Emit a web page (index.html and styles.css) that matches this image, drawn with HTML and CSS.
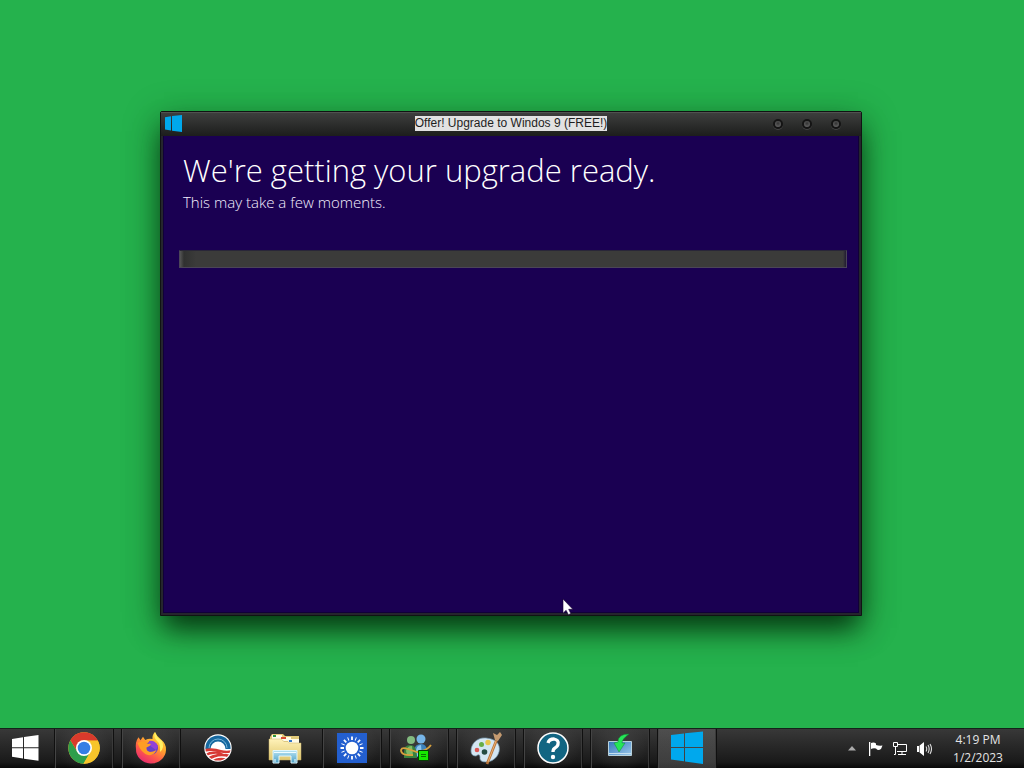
FILE: index.html
```html
<!DOCTYPE html>
<html lang="en">
<head>
<meta charset="utf-8">
<meta name="viewport" content="width=device-width, initial-scale=1">
<title>Desktop</title>
<link rel="stylesheet" href="styles.css">
</head>
<body>
<main class="desktop">
  <section class="window" aria-labelledby="window-title">
    <header class="titlebar">
      <svg class="window-logo" viewBox="0 0 17 17" aria-hidden="true"><path fill="#00a8ec" d="M0 2.200 6 1.200V15.600L0 14.600ZM7 1 17 0V17L7 15.700Z"/></svg>
      <h1 class="window-title" id="window-title">Offer! Upgrade to Windos 9 (FREE!)</h1>
      <div class="controls">
        <button class="control" aria-label="Minimize"></button>
        <button class="control" aria-label="Maximize"></button>
        <button class="control" aria-label="Close"></button>
      </div>
    </header>
    <div class="content">
      <h2 class="headline">We're getting your upgrade ready.</h2>
      <p class="detail">This may take a few moments.</p>
      <progress class="progress" value="0" max="100" aria-label="Upgrade progress"></progress>
    </div>
  </section>
  <svg class="cursor" viewBox="0 0 12 18" aria-hidden="true"><path fill="#fff" stroke="#180030" stroke-width=".6" d="M1 1V15.200L4.100 12.300 6.400 16.700 8.800 15.600 6.700 11.300H10.800Z"/></svg>
</main>
<footer class="taskbar">
  <button class="start" aria-label="Start">
    <svg width="27" height="26" viewBox="0 0 27 26"><path fill="#fff" d="M0 4 11 2.300V12.300H0ZM12 2.100 26.500 0V12.300H12ZM0 13.300H11V23.500L0 21.800ZM12 13.300H26.500V25.800L12 23.700Z"/></svg>
  </button>
  <nav class="apps" aria-label="Applications">
    <button class="app" aria-label="Chrome">
      <svg width="32" height="32" viewBox="0 0 32 32"><circle cx="16" cy="16" r="15.700" fill="#f7c52b"/><path fill="#d93a2c" d="M16 16 2.400 8.200A15.700 15.700 0 0 1 29.700 8.300H16Z"/><path fill="#2e9e4b" d="M2.400 8.200A15.700 15.700 0 0 0 15.500 31.700L22.400 20 16 16 9.400 19.800Z"/><path fill="#f7c52b" d="M29.700 8.300A15.700 15.700 0 0 1 15.500 31.700L22.700 19.500 23 12Z"/><path fill="#d93a2c" d="M2.400 8.200 9 19 16 8.300H29.700V8Z"/><circle cx="16" cy="16" r="8" fill="#fff"/><circle cx="16" cy="16" r="6.300" fill="#347ee5"/></svg>
    </button>
    <button class="app" aria-label="Firefox">
      <svg width="32" height="32" viewBox="0 0 32 32"><defs><linearGradient id="fox" x1=".85" y1="0" x2=".25" y2="1"><stop offset="0" stop-color="#ffed49"/><stop offset=".4" stop-color="#ffa52c"/><stop offset=".7" stop-color="#ff584b"/><stop offset="1" stop-color="#e52672"/></linearGradient></defs><path fill="url(#fox)" d="M3.500 5.300 5.500 8.200 8 4.800 10.200 8Q14 6 17.500 7 17 3 20 0 21.500 4 26 7.500 31.500 12 31 18A15 14 0 0 1 1 17Q0 10 3.500 5.300Z"/><circle cx="16.500" cy="16" r="6.500" fill="#6541c9"/><path fill="#9241d6" d="M14 9Q20 8 23 14L21 18 14 13Z"/><path fill="#ff9d25" d="M2.500 11Q5 8.500 10.500 9.500L12 11.500 16 12Q15 14.500 11.500 15.500 11 19 15 20 18 20 21.500 18 19 24 13 23 6 21 2.500 11Z"/><path fill="#fff063" d="M20 0Q18 5 22 9 26 12 25 20 30 16 27 9 21 5 20 0Z"/></svg>
    </button>
    <button class="app plain" aria-label="Campaign">
      <svg width="28" height="28" viewBox="0 0 28 28"><defs><clipPath id="disc"><circle cx="14" cy="14" r="12.600"/></clipPath></defs><circle cx="14" cy="14" r="13.700" fill="#fff"/><g clip-path="url(#disc)"><path fill="#16689f" d="M0 0H28V15H21.500A7.500 7.500 0 0 0 6.500 15H0Z"/><path fill="none" stroke="#76b6d9" d="M5 14A9 9 0 0 1 23 14"/><path fill="#d73a35" d="M0 15Q9 13 17 16 23 17.500 28 16V18.500Q20 20 14 18 7 16 0 18ZM0 20.500Q9 15 20 20L17 20.500Q9 18 0 23ZM1 25Q12 17 28 21L25 23.500Q14 20 4 27ZM7 27Q14 22 23 24.500L17 28Z"/></g></svg>
    </button>
    <button class="app plain" aria-label="File Explorer">
      <svg width="34" height="32" viewBox="0 0 34 32"><defs><linearGradient id="folder" x2="0" y2="1"><stop stop-color="#fff2b9"/><stop offset="1" stop-color="#dfc76d"/></linearGradient><linearGradient id="stand" x2="0" y2="1"><stop stop-color="#b8e3f3"/><stop offset="1" stop-color="#4c9fc4"/></linearGradient></defs><path fill="#e2cb7b" d="M2 5 4 2H15L17 4H31V28H2Z"/><path fill="#fffbe8" d="M4 3H14V7H4ZM12 5H23V9H12ZM20 7H31V11H20Z"/><path fill="#2f963e" d="M5 3H8V5H5Z"/><path fill="#d84a32" d="M13 5H18V7H13Z"/><path fill="#3778c7" d="M21 8H24V10H21Z"/><path fill="url(#folder)" stroke="#c9b26a" stroke-width=".5" d="M1 7H13L16 9.500H20L21 11H33V28H1Z"/><path fill="url(#stand)" stroke="#dff6fd" d="M5 18.500H29V31H23V24H11V31H5Z"/><path stroke="#effcff" fill="none" d="M6 20.500H28M7 27V30M27 27V30"/></svg>
    </button>
    <button class="app" aria-label="Brightness">
      <svg width="30" height="30" viewBox="0 0 30 30"><path fill="#235fcf" d="M0 0H30V30H0Z"/><circle cx="15" cy="15" r="6.300" fill="#fff"/><g stroke="#fff" stroke-width="1.800"><path id="rays" d="M15 3.500V7M15 23V26.500M3.500 15H7M23 15H26.500M6.900 6.900 9.300 9.300M20.700 20.700 23.100 23.100M6.900 23.100 9.300 20.700M20.700 9.300 23.100 6.900"/><use href="#rays" transform="rotate(22.500 15 15)" stroke-width="1"/></g></svg>
    </button>
    <button class="app" aria-label="Messenger">
      <svg class="nudge-left" width="34" height="32" viewBox="0 0 34 32"><circle cx="22" cy="7" r="4.500" fill="#76b5e8"/><path fill="#3d82bd" d="M15 25V18Q16 12 22 12 29 12 29 25Z"/><path fill="#8cc5ed" d="M17 20Q17 13 22 13L23 24H18Z"/><circle cx="12" cy="8" r="4" fill="#83bb80"/><path fill="#39813e" d="M5 26V20Q5 13 11 13 18 13 18 26Z"/><path fill="#83ba65" d="M7 19Q8 14 13 14L14 23H8Z"/><path fill="none" stroke="#d7a13d" stroke-width="1.800" d="M14 23Q2 24 2 18 3 15 9 17L18 20Q28 19 32 13"/><path fill="#16e900" stroke="#063f04" d="M19.500 18.500H29.500V28.500H19.500Z"/><path stroke="#087600" d="M22 22.500H27M22 24.500H27"/></svg>
    </button>
    <button class="app" aria-label="Paint">
      <svg width="34" height="34" viewBox="0 0 34 34"><path fill="#d3e6f3" stroke="#799bb0" stroke-width=".7" d="M17 7C8 6 2 13 2 20Q2 25 7 25 11 22 11 26 10 31 17 31C26 31 32 22 30 15Q28 8 17 7Z"/><circle cx="15.500" cy="21" r="2.800" fill="#244b43"/><circle cx="8" cy="19" r="2.300" fill="#d95754"/><circle cx="12.500" cy="13.500" r="2.500" fill="#67ad47"/><circle cx="19" cy="11.500" r="2.700" fill="#eac54c"/><path stroke="#b8743a" stroke-width="2.700" d="M18 33 28 8"/><path stroke="#edb071" d="M19 31 27 10"/><path fill="#c49a70" d="M26 9 24 2 28 4 31 1 33 4 29 10Z"/></svg>
    </button>
    <button class="app" aria-label="Help">
      <svg width="34" height="34" viewBox="0 0 34 34"><circle cx="17" cy="17" r="15" fill="#126582" stroke="#fff" stroke-width="1.500"/><path fill="none" stroke="#fff" stroke-width="3.300" d="M12 12Q13 8 18 8 23 9 22 13 22 15 19 17 17 18 17 21"/><circle cx="17" cy="26" r="2.200" fill="#fff"/></svg>
    </button>
    <button class="app" aria-label="Desktop download">
      <svg width="26" height="30" viewBox="0 0 26 30"><defs><linearGradient id="screen" x2="1" y2="1"><stop stop-color="#3375b9"/><stop offset="1" stop-color="#9bc8ea"/></linearGradient></defs><path fill="url(#screen)" stroke="#b7d1dc" d="M1.500 8.500H24.500V22.500H1.500Z"/><path stroke="#c6e0ef" d="M2 20.500H24"/><path fill="#25e557" stroke="#128735" stroke-width=".5" d="M22 1Q11 1 11 9L7 10 12 19 18 10H15Q15 6 22 1Z"/></svg>
    </button>
    <button class="app active" aria-label="Windos upgrade">
      <svg width="34" height="34" viewBox="0 0 34 34"><path fill="#00a8ed" d="M1 4 14 2.500V16H1ZM15 2.300 33 .5V16H15ZM1 17H14V30.200L1 28.500ZM15 17H33V33L15 30.500Z"/></svg>
    </button>
  </nav>
  <div class="tray">
    <button class="tray-icon" aria-label="Show hidden icons"><svg width="8" height="5" viewBox="0 0 8 5"><path fill="#aaa" d="M4 0 8 4.500H0Z"/></svg></button>
    <button class="tray-icon" aria-label="Action Center"><svg width="16" height="16" viewBox="0 0 16 16"><path fill="#fff" d="M1 1H2.300V15H1ZM3 2Q6 1 8 2.500V4Q11 5 14.500 4.500L13 8 11 9Q9 9 8 7.500 5 7 3 8Z"/></svg></button>
    <button class="tray-icon" aria-label="Network"><svg width="16" height="16" viewBox="0 0 16 16"><path fill="none" stroke="#fff" d="M6 3.500H14.500V10.500H5M10 11V13.500M6 13.500H14M1.500 1.500V5.500H5.500V1.500ZM3.500 6V13.500H2"/></svg></button>
    <button class="tray-icon" aria-label="Volume"><svg width="16" height="16" viewBox="0 0 16 16"><path fill="#fff" d="M1 5H3V11H1ZM3.600 4.500 8 1V15L3.600 11.500Z"/><path fill="none" stroke="#ddd" stroke-width="1.100" d="M10 5.500Q11.500 8 10 10.500M12 4Q14.300 8 12 12M14 3Q17 8 14 13"/></svg></button>
    <time class="clock" datetime="2023-01-02T16:19"><span>4:19 PM</span><span>1/2/2023</span></time>
  </div>
</footer>
</body>
</html>
```

FILE: styles.css
```css
* {
  box-sizing: border-box;
}

body {
  display: flex;
  flex-direction: column;
  min-height: 100vh;
  margin: 0;
  background: #25b24d;
  font-family: "Open Sans", "Noto Sans", sans-serif;
}

button {
  display: flex;
  align-items: center;
  justify-content: center;
  padding: 0;
  border: 0;
  background: none;
}

svg {
  display: block;
}

.desktop {
  position: relative;
  display: flex;
  flex: 1;
  align-items: center;
  justify-content: center;
  padding: 0 2px 2px 0;
}

.window {
  display: flex;
  flex-direction: column;
  width: min(702px, 92vw);
  min-height: 505px;
  border: 1px solid #101313;
  border-radius: 2px 2px 0 0;
  background: #25252d;
  box-shadow: 0 16px 26px -4px rgba(0, 30, 5, .75), 0 8px 36px rgba(0, 50, 15, .4);
}

.titlebar {
  display: grid;
  grid-template-columns: 1fr auto 1fr;
  align-items: center;
  height: 24px;
  padding: 0 20px 1px 4px;
  border-top: 1px solid #505250;
  background: linear-gradient(#3d3e3d, #1c1d1c);
}

.window-logo {
  width: 17px;
  height: 17px;
}

.window-title {
  margin: 0 0 0 16px;
  background: #e2e2e2;
  color: #1e1e1e;
  font: 400 12px/15px "Liberation Sans", Arial, sans-serif;
}

.controls {
  display: flex;
  justify-content: flex-end;
  gap: 19px;
}

.control {
  width: 10px;
  height: 10px;
  border: 2px solid #141414;
  border-radius: 50%;
  background: radial-gradient(circle at 50% 40%, #383838 10%, #666 80%);
  box-shadow: 0 1px 0 #444;
}

.content {
  flex: 1;
  margin: 0 2px 2px;
  padding: 12px 11px 20px 15px;
  border: 1px solid #100038;
  border-top: 0;
  background: #1a0052;
  color: #fff;
}

.headline {
  margin: 0;
  padding-left: 4px;
  font-size: 31px;
  font-weight: 300;
  line-height: 44px;
}

.detail {
  margin: 0 0 38px;
  padding-left: 4px;
  color: #f4efff;
  font-size: 15px;
  font-weight: 300;
  line-height: 20px;
}

.progress {
  display: block;
  width: 100%;
  height: 18px;
  border: 1px solid #4b4558;
  border-top-color: #292638;
  appearance: none;
  background: #3b3b3b;
}

.progress::-webkit-progress-bar {
  background: linear-gradient(90deg, #555 0, #303130 4px, #3b3b3a 16px, #3b3b3a calc(100% - 3px), #211a33 100%);
}

.cursor {
  position: absolute;
  top: 598px;
  left: 562px;
  width: 12px;
  height: 18px;
}

.taskbar {
  display: flex;
  height: 40px;
  border-top: 1px solid #14221a;
  background: linear-gradient(#383838, #191919 85%, #080808);
}

.start {
  width: 54px;
  padding: 0 4px 2px 0;
}

.apps {
  display: flex;
  flex: 1;
  gap: 7px;
}

.app {
  width: 60px;
  padding-bottom: 1px;
  border: solid #101010;
  border-width: 0 1px;
  background: radial-gradient(circle at 50% 45%, rgba(110, 110, 110, .25), transparent 75%);
  box-shadow: inset 1px 0 #444, inset -1px 0 #3a3a3a;
}

.plain {
  border-color: transparent;
  background: none;
  box-shadow: none;
}

.active {
  background: linear-gradient(rgba(130, 130, 130, .3), rgba(110, 110, 110, .45));
}

.nudge-left {
  margin-right: 6px;
}

.tray {
  display: flex;
  align-items: center;
  gap: 8px;
  padding-right: 16px;
}

.tray-icon {
  width: 16px;
  height: 24px;
}

.clock {
  display: flex;
  flex-direction: column;
  width: 60px;
  margin-left: 8px;
  color: #e4e4e4;
  font-size: 12px;
  line-height: 18px;
  text-align: center;
}
```
